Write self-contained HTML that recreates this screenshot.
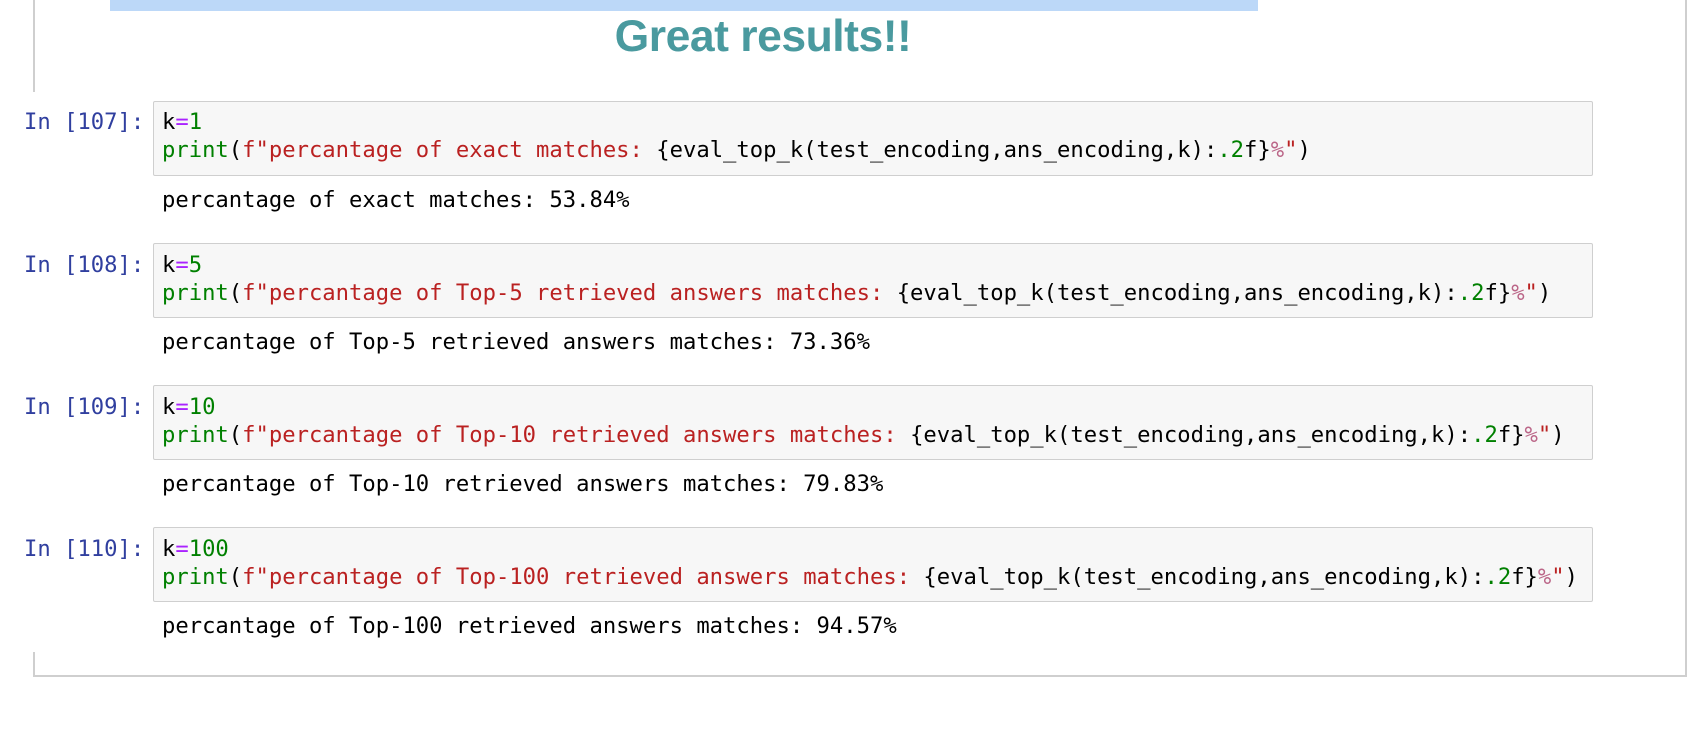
<!DOCTYPE html>
<html><head><meta charset="utf-8"><style>
html,body{margin:0;padding:0;background:#fff;width:1690px;height:730px;overflow:hidden;position:relative}
.a{position:absolute}
.mono{font-family:"DejaVu Sans Mono","Liberation Mono",monospace;font-size:22.2px;line-height:28px;white-space:pre;color:#000}
.box{position:absolute;left:153px;width:1440px;height:75px;background:#f7f7f7;border:1px solid #cfcfcf;border-radius:2px;box-sizing:border-box}
.pr{color:#303f9f}
.g{color:#008000}.s{color:#ba2121}.o{color:#aa22ff}.n{color:#008000}.i{color:#bb6688}
</style></head><body>
<div class="a" style="left:110px;top:0;width:1148px;height:11px;background:#bcd8f8"></div>
<div class="a" style="left:33px;top:0;width:2px;height:92px;background:#cfcfcf"></div>
<div class="a" style="left:33px;top:652px;width:2px;height:24px;background:#cfcfcf"></div>
<div class="a" style="left:33px;top:675px;width:1654px;height:2px;background:#cfcfcf"></div>
<div class="a" style="left:1685px;top:0;width:2px;height:677px;background:#cfcfcf"></div>
<div class="a" style="left:540px;top:11px;width:446px;text-align:center;font-family:'Liberation Sans',Arial,sans-serif;font-weight:bold;font-size:44.5px;line-height:52px;color:#4a9a9f;letter-spacing:-0.5px">Great results!!</div>

<div class="box" style="top:101px"></div>
<div class="a mono pr" style="left:24px;top:108px">In [107]:</div>
<div class="a mono" style="left:162px;top:108px">k<span class="o">=</span><span class="n">1</span>
<span class="g">print</span>(<span class="s">f"percantage of exact matches: </span>{eval_top_k(test_encoding,ans_encoding,k):<span class="n">.2</span>f}<span class="i">%</span><span class="s">"</span>)</div>
<div class="a mono" style="left:162px;top:186px">percantage of exact matches: 53.84%</div>

<div class="box" style="top:243px"></div>
<div class="a mono pr" style="left:24px;top:251px">In [108]:</div>
<div class="a mono" style="left:162px;top:251px">k<span class="o">=</span><span class="n">5</span>
<span class="g">print</span>(<span class="s">f"percantage of Top-5 retrieved answers matches: </span>{eval_top_k(test_encoding,ans_encoding,k):<span class="n">.2</span>f}<span class="i">%</span><span class="s">"</span>)</div>
<div class="a mono" style="left:162px;top:328px">percantage of Top-5 retrieved answers matches: 73.36%</div>

<div class="box" style="top:385px"></div>
<div class="a mono pr" style="left:24px;top:393px">In [109]:</div>
<div class="a mono" style="left:162px;top:393px">k<span class="o">=</span><span class="n">10</span>
<span class="g">print</span>(<span class="s">f"percantage of Top-10 retrieved answers matches: </span>{eval_top_k(test_encoding,ans_encoding,k):<span class="n">.2</span>f}<span class="i">%</span><span class="s">"</span>)</div>
<div class="a mono" style="left:162px;top:470px">percantage of Top-10 retrieved answers matches: 79.83%</div>

<div class="box" style="top:527px"></div>
<div class="a mono pr" style="left:24px;top:535px">In [110]:</div>
<div class="a mono" style="left:162px;top:535px">k<span class="o">=</span><span class="n">100</span>
<span class="g">print</span>(<span class="s">f"percantage of Top-100 retrieved answers matches: </span>{eval_top_k(test_encoding,ans_encoding,k):<span class="n">.2</span>f}<span class="i">%</span><span class="s">"</span>)</div>
<div class="a mono" style="left:162px;top:612px">percantage of Top-100 retrieved answers matches: 94.57%</div>
</body></html>
